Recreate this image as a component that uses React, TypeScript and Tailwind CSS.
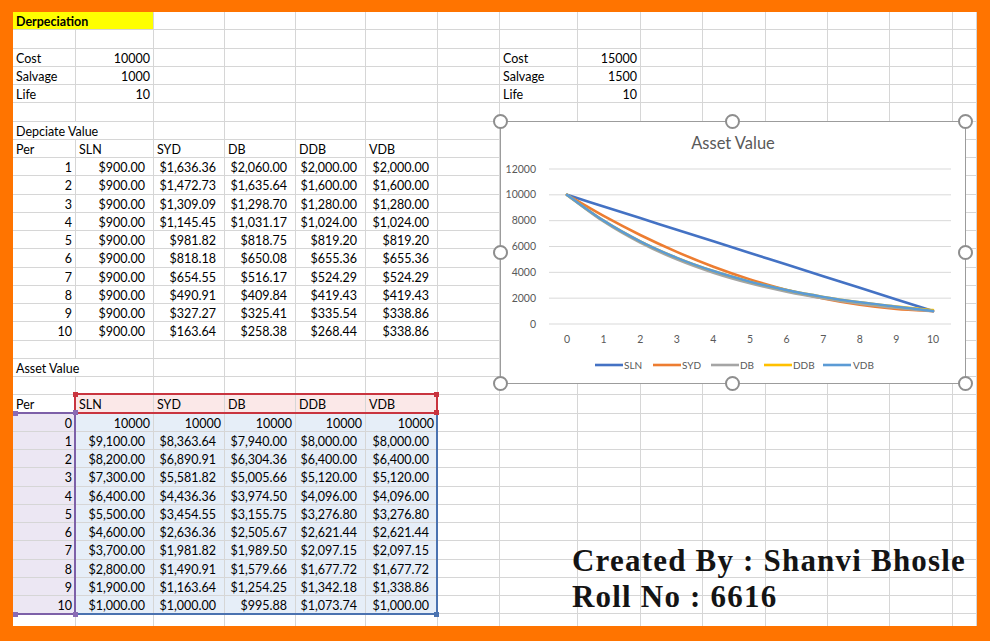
import React from "react";

type Kind = "l" | "n" | "c" | "b";
type Cell = { t: string; k: Kind };

const HEIGHTS = Array.from({ length: 34 }, (_, i) => [18, 19, 18, 18][i % 4]);

const depr: string[][] = [
  ["$900.00", "$1,636.36", "$2,060.00", "$2,000.00", "$2,000.00"],
  ["$900.00", "$1,472.73", "$1,635.64", "$1,600.00", "$1,600.00"],
  ["$900.00", "$1,309.09", "$1,298.70", "$1,280.00", "$1,280.00"],
  ["$900.00", "$1,145.45", "$1,031.17", "$1,024.00", "$1,024.00"],
  ["$900.00", "$981.82", "$818.75", "$819.20", "$819.20"],
  ["$900.00", "$818.18", "$650.08", "$655.36", "$655.36"],
  ["$900.00", "$654.55", "$516.17", "$524.29", "$524.29"],
  ["$900.00", "$490.91", "$409.84", "$419.43", "$419.43"],
  ["$900.00", "$327.27", "$325.41", "$335.54", "$338.86"],
  ["$900.00", "$163.64", "$258.38", "$268.44", "$338.86"],
];

const asset: string[][] = [
  ["$9,100.00", "$8,363.64", "$7,940.00", "$8,000.00", "$8,000.00"],
  ["$8,200.00", "$6,890.91", "$6,304.36", "$6,400.00", "$6,400.00"],
  ["$7,300.00", "$5,581.82", "$5,005.66", "$5,120.00", "$5,120.00"],
  ["$6,400.00", "$4,436.36", "$3,974.50", "$4,096.00", "$4,096.00"],
  ["$5,500.00", "$3,454.55", "$3,155.75", "$3,276.80", "$3,276.80"],
  ["$4,600.00", "$2,636.36", "$2,505.67", "$2,621.44", "$2,621.44"],
  ["$3,700.00", "$1,981.82", "$1,989.50", "$2,097.15", "$2,097.15"],
  ["$2,800.00", "$1,490.91", "$1,579.66", "$1,677.72", "$1,677.72"],
  ["$1,900.00", "$1,163.64", "$1,254.25", "$1,342.18", "$1,338.86"],
  ["$1,000.00", "$1,000.00", "$995.88", "$1,073.74", "$1,000.00"],
];

const HEAD = ["SLN", "SYD", "DB", "DDB", "VDB"];

function buildCells(): Map<string, Cell> {
  const m = new Map<string, Cell>();
  const set = (r: number, c: number, t: string, k: Kind) => m.set(`${r},${c}`, { t, k });
  set(1, 0, "Derpeciation", "b");
  set(3, 0, "Cost", "l");
  set(3, 1, "10000", "n");
  set(4, 0, "Salvage", "l");
  set(4, 1, "1000", "n");
  set(5, 0, "Life", "l");
  set(5, 1, "10", "n");
  set(3, 7, "Cost", "l");
  set(3, 8, "15000", "n");
  set(4, 7, "Salvage", "l");
  set(4, 8, "1500", "n");
  set(5, 7, "Life", "l");
  set(5, 8, "10", "n");
  set(7, 0, "Depciate Value", "l");
  set(8, 0, "Per", "l");
  HEAD.forEach((h, i) => set(8, i + 1, h, "l"));
  depr.forEach((row, i) => {
    set(9 + i, 0, String(i + 1), "n");
    row.forEach((v, j) => set(9 + i, j + 1, v, "c"));
  });
  set(20, 0, "Asset Value", "l");
  set(22, 0, "Per", "l");
  HEAD.forEach((h, i) => set(22, i + 1, h, "l"));
  set(23, 0, "0", "n");
  for (let j = 1; j <= 5; j++) set(23, j, "10000", "n");
  asset.forEach((row, i) => {
    set(24 + i, 0, String(i + 1), "n");
    row.forEach((v, j) => set(24 + i, j + 1, v, "c"));
  });
  return m;
}

const CELLS = buildCells();

function cellBg(r: number, c: number): string {
  if (r === 1 && c <= 1) return "bg-[#ffff00]";
  if (r === 22 && c >= 1 && c <= 5) return "bg-[#fbe8e8]";
  if (r >= 23 && r <= 33 && c === 0) return "bg-[#ece7f3]";
  if (r >= 23 && r <= 33 && c >= 1 && c <= 5) return "bg-[#e6eef8]";
  return "";
}

function noRight(r: number, c: number) {
  return c === 0 && (r === 1 || r === 7 || r === 20);
}

const kindCls: Record<Kind, string> = {
  l: "justify-start pl-[3px]",
  b: "justify-start pl-[3px] font-bold",
  n: "justify-end pr-[3px]",
  c: "justify-end pr-[8px]",
};

function Sheet() {
  const rows: React.ReactNode[] = [];
  for (let r = 1; r <= 34; r++) {
    const h = HEIGHTS[r - 1] === 19 ? "h-[19px]" : "h-[18px]";
    for (let c = 0; c < 15; c++) {
      const cell = CELLS.get(`${r},${c}`);
      rows.push(
        <div
          key={`${r}-${c}`}
          className={`${h} ${cellBg(r, c)} ${noRight(r, c) ? "" : "border-r"} border-b border-[#d6d6d6] flex items-center pt-[3px] whitespace-nowrap overflow-visible ${
            cell ? kindCls[cell.k] : ""
          }`}
        >
          {cell ? <span className="relative z-10">{cell.t}</span> : null}
        </div>
      );
    }
  }
  return (
    <div className="grid grid-cols-[63px_78px_71px_71px_70px_72px_62px_78px_63px_62px_63px_62px_62px_63px_24px] text-[12.5px] leading-none text-black font-['Lato',sans-serif]">
      {rows}
    </div>
  );
}

const SERIES: { name: string; color: string; data: number[] }[] = [
  { name: "SLN", color: "#4472c4", data: [10000, 9100, 8200, 7300, 6400, 5500, 4600, 3700, 2800, 1900, 1000] },
  { name: "SYD", color: "#ed7d31", data: [10000, 8363.64, 6890.91, 5581.82, 4436.36, 3454.55, 2636.36, 1981.82, 1490.91, 1163.64, 1000] },
  { name: "DB", color: "#a5a5a5", data: [10000, 7940, 6304.36, 5005.66, 3974.5, 3155.75, 2505.67, 1989.5, 1579.66, 1254.25, 995.88] },
  { name: "DDB", color: "#ffc000", data: [10000, 8000, 6400, 5120, 4096, 3276.8, 2621.44, 2097.15, 1677.72, 1342.18, 1073.74] },
  { name: "VDB", color: "#5b9bd5", data: [10000, 8000, 6400, 5120, 4096, 3276.8, 2621.44, 2097.15, 1677.72, 1338.86, 1000] },
];

const px = (i: number) => 66 + 36.6 * i;
const py = (v: number) => 202 - (v * 155) / 12000;

function smoothPath(data: number[]) {
  const p = data.map((v, i) => [px(i), py(v)]);
  let d = `M${p[0][0]},${p[0][1]}`;
  for (let i = 0; i < p.length - 1; i++) {
    const p0 = p[i - 1] || p[i];
    const p1 = p[i];
    const p2 = p[i + 1];
    const p3 = p[i + 2] || p2;
    const c1x = p1[0] + (p2[0] - p0[0]) / 6;
    const c1y = p1[1] + (p2[1] - p0[1]) / 6;
    const c2x = p2[0] - (p3[0] - p1[0]) / 6;
    const c2y = p2[1] - (p3[1] - p1[1]) / 6;
    d += ` C${c1x},${c1y} ${c2x},${c2y} ${p2[0]},${p2[1]}`;
  }
  return d;
}

const LEGEND = [
  { x: 94, tx: 123 },
  { x: 152, tx: 181 },
  { x: 210, tx: 239 },
  { x: 263, tx: 292 },
  { x: 322, tx: 352 },
];

function Handle({ pos }: { pos: string }) {
  return <div className={`absolute ${pos} w-[15px] h-[15px] rounded-full border-2 border-[#8e8e8e] bg-white`} />;
}

function Chart() {
  return (
    <div className="absolute left-[487px] top-[109px] w-[466px] h-[263px] bg-white border border-[#9c9c9c] z-20">
      <svg width="464" height="261" className="block font-['Lato',sans-serif]">
        <text x="232" y="26.5" textAnchor="middle" fontSize="16.5" fill="#595959">
          Asset Value
        </text>
        {[0, 2000, 4000, 6000, 8000, 10000, 12000].map((v) => (
          <g key={v}>
            <line x1="48" x2="450" y1={py(v)} y2={py(v)} stroke="#d9d9d9" strokeWidth="1" />
            <text x="35" y={py(v) + 3.5} textAnchor="end" fontSize="10.5" fill="#595959">
              {v}
            </text>
          </g>
        ))}
        {Array.from({ length: 11 }, (_, i) => (
          <text key={i} x={px(i)} y="221" textAnchor="middle" fontSize="10.5" fill="#595959">
            {i}
          </text>
        ))}
        {SERIES.map((s) => (
          <path key={s.name} d={smoothPath(s.data)} fill="none" stroke={s.color} strokeWidth="2.6" strokeLinecap="round" strokeLinejoin="round" />
        ))}
        {SERIES.map((s, i) => (
          <g key={s.name}>
            <line x1={LEGEND[i].x} x2={LEGEND[i].x + 28} y1="243" y2="243" stroke={s.color} strokeWidth="2.6" />
            <text x={LEGEND[i].tx} y="246.5" fontSize="10" fill="#595959">
              {s.name}
            </text>
          </g>
        ))}
      </svg>
      <Handle pos="-left-[8px] -top-[8px]" />
      <Handle pos="left-[224px] -top-[8px]" />
      <Handle pos="-right-[8px] -top-[8px]" />
      <Handle pos="-left-[8px] top-[123px]" />
      <Handle pos="-right-[8px] top-[123px]" />
      <Handle pos="-left-[8px] -bottom-[8px]" />
      <Handle pos="left-[224px] -bottom-[8px]" />
      <Handle pos="-right-[8px] -bottom-[8px]" />
    </div>
  );
}

function Sq({ pos, color }: { pos: string; color: string }) {
  return <div className={`absolute ${pos} w-[5px] h-[5px] z-30 ${color}`} />;
}

function Selections() {
  return (
    <>
      <div className="absolute left-[61px] top-[400px] w-[364px] h-[203px] border-2 border-[#4a72b0] z-20 pointer-events-none" />
      <div className="absolute -left-[4px] top-[400px] w-[67px] h-[203px] border-2 border-[#7d60a8] z-20 pointer-events-none" />
      <div className="absolute left-[61px] top-[381px] w-[364px] h-[21px] border-2 border-[#c9343f] z-20 pointer-events-none" />
      <Sq pos="left-[60px] top-[380px]" color="bg-[#c9343f]" />
      <Sq pos="left-[421px] top-[380px]" color="bg-[#c9343f]" />
      <Sq pos="left-[421px] top-[398px]" color="bg-[#c9343f]" />
      <Sq pos="left-[60px] top-[398px]" color="bg-[#8a6bb4]" />
      <Sq pos="left-[0px] top-[399px]" color="bg-[#8a6bb4]" />
      <Sq pos="left-[0px] top-[600px]" color="bg-[#8a6bb4]" />
      <Sq pos="left-[60px] top-[600px]" color="bg-[#8a6bb4]" />
      <Sq pos="left-[421px] top-[600px]" color="bg-[#4a72b0]" />
    </>
  );
}

export default function App() {
  return (
    <div className="w-[990px] h-[641px] bg-[#ff7400] pt-[12px] pl-[13px]">
      <div className="relative w-[964px] h-[614px] bg-white overflow-hidden">
        <Sheet />
        <Selections />
        <Chart />
        <div className="absolute left-[559px] top-[531px] z-20 font-['Liberation_Serif',serif] font-bold text-[31px] leading-[36px] tracking-[1.2px] text-[#141414] whitespace-nowrap">
          <div>Created By : Shanvi Bhosle</div>
          <div>Roll No : 6616</div>
        </div>
      </div>
    </div>
  );
}
